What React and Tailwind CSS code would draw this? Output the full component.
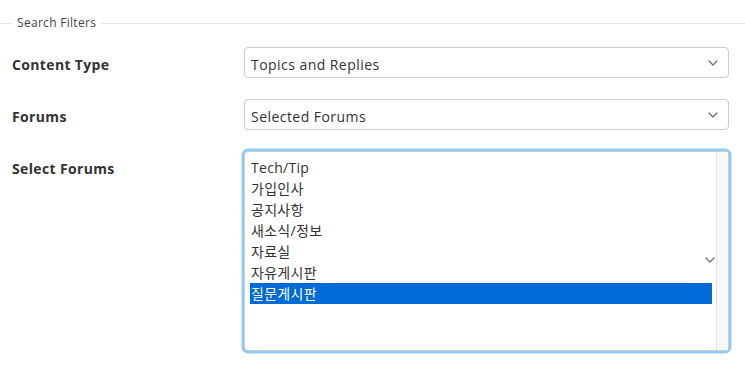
import React from "react";

const Chevron = ({ className = "" }) => (
  <svg className={className} width="10" height="6" viewBox="0 0 10 6" fill="none">
    <path d="M1 1l4 4 4-4" stroke="#6b6b6b" strokeWidth="1.2" strokeLinecap="round" strokeLinejoin="round" />
  </svg>
);

const font = { fontFamily: "'Open Sans', 'Noto Sans CJK KR', sans-serif" };

function Select({ value }) {
  return (
    <div className="flex h-[31px] w-[485px] items-center justify-between rounded-[4px] border border-[#cccccc] bg-white pl-[6px] pr-[10px] text-[14px] tracking-[0.45px] text-[#333333]">
      <span className="pt-[3px]">{value}</span>
      <Chevron />
    </div>
  );
}

const options = ["Tech/Tip", "가입인사", "공지사항", "새소식/정보", "자료실", "자유게시판", "질문게시판"];

export default function App() {
  return (
    <div className="h-[367px] w-[745px] bg-white" style={font}>
      <div className="flex items-center pt-[15px]">
        <div className="h-px w-[12px] bg-[#e6e6e6]" />
        <span className="px-[5px] text-[12px] leading-[16px] tracking-[0.3px] text-[#444444]">Search Filters</span>
        <div className="h-px flex-1 bg-[#e6e6e6]" />
      </div>
      <div className="mt-[16px] flex flex-col gap-[21px]">
        <div className="flex items-start">
          <div className="w-[244px] pl-[12px] pt-[8px] text-[14px] font-bold leading-[20px] tracking-[0.35px] text-[#333333]">Content Type</div>
          <Select value="Topics and Replies" />
        </div>
        <div className="flex items-start">
          <div className="w-[244px] pl-[12px] pt-[8px] text-[14px] font-bold leading-[20px] tracking-[0.35px] text-[#333333]">Forums</div>
          <Select value="Selected Forums" />
        </div>
        <div className="flex items-start">
          <div className="w-[244px] pl-[12px] pt-[8px] text-[14px] font-bold leading-[20px] tracking-[0.35px] text-[#333333]">Select Forums</div>
          <div className="relative flex h-[200px] w-[485px] rounded-[4px] border border-[#cccccc] bg-white shadow-[0_0_0_2.5px_#8fcbf7]">
            <div className="flex-1 pl-[5px] pr-[4px] pt-[5px]">
              {options.map((o, i) => (
                <div
                  key={o}
                  className={
                    "h-[21px] pl-[1px] text-[14px] leading-[21px] tracking-[0.3px] " +
                    (i === options.length - 1 ? "bg-[#006bd6] text-white" : "text-[#333333]")
                  }
                >
                  {o}
                </div>
              ))}
            </div>
            <div className="w-[12px] border-l border-[#e3e3e3] bg-[#f8f8f8]" />
            <Chevron className="absolute right-[13px] top-[105px]" />
          </div>
        </div>
      </div>
    </div>
  );
}
